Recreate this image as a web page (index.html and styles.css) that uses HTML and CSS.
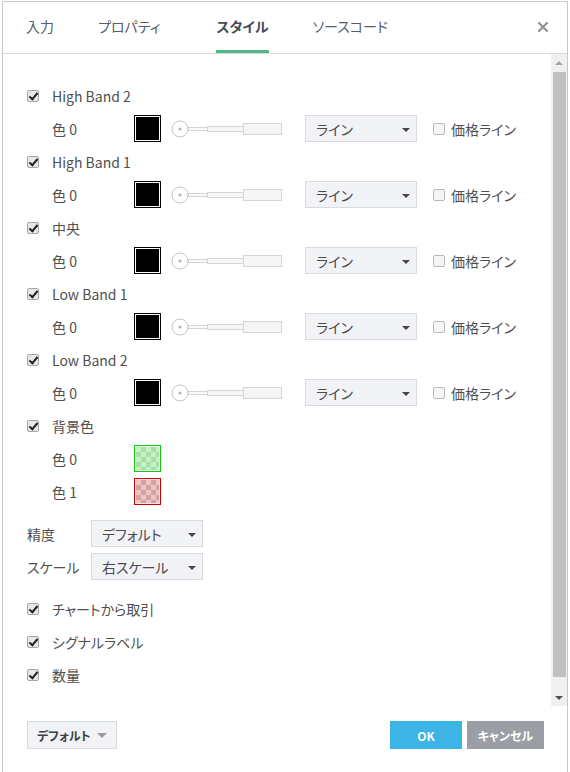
FILE: index.html
```html
<!DOCTYPE html>
<html lang="ja">
<head>
<meta charset="utf-8">
<title>スタイル</title>
<link rel="stylesheet" href="styles.css">
</head>
<body>
<div class="dialog">
  <div class="tabs">
    <div class="tab">入力</div>
    <div class="tab">プロパティ</div>
    <div class="tab tab-active">スタイル</div>
    <div class="tab">ソースコード</div>
    <div class="close"><svg width="10" height="10" viewBox="0 0 10 10"><path d="M1 1L9 9M9 1L1 9" stroke="#8e939b" stroke-width="2.2" stroke-linecap="square"/></svg></div>
  </div>
  <div class="body">
    <div class="content">
      <div class="row"><span class="cb on"></span><span class="lbl">High Band 2</span></div>
      <div class="row sub"><span class="sublbl">色 0</span><span class="swatch black"></span><svg class="slider" width="111" height="20" viewBox="0 0 111 20"><rect x="17" y="8.5" width="20" height="3" fill="#fafafa" stroke="#d3d5da"/><rect x="36.5" y="7.5" width="36" height="5" fill="#f7f7f7" stroke="#d3d5da"/><rect x="72.5" y="4.5" width="38" height="11" fill="#f6f6f6" stroke="#d3d5da"/><circle cx="9" cy="10" r="8" fill="#fff" stroke="#c3c6cd"/><circle cx="9" cy="10" r="1.6" fill="#b4b8bf"/></svg><span class="select sel-line"><span>ライン</span><i class="arrow"></i></span><span class="cb off"></span><span class="cblbl">価格ライン</span></div>
      <div class="row"><span class="cb on"></span><span class="lbl">High Band 1</span></div>
      <div class="row sub"><span class="sublbl">色 0</span><span class="swatch black"></span><svg class="slider" width="111" height="20" viewBox="0 0 111 20"><rect x="17" y="8.5" width="20" height="3" fill="#fafafa" stroke="#d3d5da"/><rect x="36.5" y="7.5" width="36" height="5" fill="#f7f7f7" stroke="#d3d5da"/><rect x="72.5" y="4.5" width="38" height="11" fill="#f6f6f6" stroke="#d3d5da"/><circle cx="9" cy="10" r="8" fill="#fff" stroke="#c3c6cd"/><circle cx="9" cy="10" r="1.6" fill="#b4b8bf"/></svg><span class="select sel-line"><span>ライン</span><i class="arrow"></i></span><span class="cb off"></span><span class="cblbl">価格ライン</span></div>
      <div class="row"><span class="cb on"></span><span class="lbl">中央</span></div>
      <div class="row sub"><span class="sublbl">色 0</span><span class="swatch black"></span><svg class="slider" width="111" height="20" viewBox="0 0 111 20"><rect x="17" y="8.5" width="20" height="3" fill="#fafafa" stroke="#d3d5da"/><rect x="36.5" y="7.5" width="36" height="5" fill="#f7f7f7" stroke="#d3d5da"/><rect x="72.5" y="4.5" width="38" height="11" fill="#f6f6f6" stroke="#d3d5da"/><circle cx="9" cy="10" r="8" fill="#fff" stroke="#c3c6cd"/><circle cx="9" cy="10" r="1.6" fill="#b4b8bf"/></svg><span class="select sel-line"><span>ライン</span><i class="arrow"></i></span><span class="cb off"></span><span class="cblbl">価格ライン</span></div>
      <div class="row"><span class="cb on"></span><span class="lbl">Low Band 1</span></div>
      <div class="row sub"><span class="sublbl">色 0</span><span class="swatch black"></span><svg class="slider" width="111" height="20" viewBox="0 0 111 20"><rect x="17" y="8.5" width="20" height="3" fill="#fafafa" stroke="#d3d5da"/><rect x="36.5" y="7.5" width="36" height="5" fill="#f7f7f7" stroke="#d3d5da"/><rect x="72.5" y="4.5" width="38" height="11" fill="#f6f6f6" stroke="#d3d5da"/><circle cx="9" cy="10" r="8" fill="#fff" stroke="#c3c6cd"/><circle cx="9" cy="10" r="1.6" fill="#b4b8bf"/></svg><span class="select sel-line"><span>ライン</span><i class="arrow"></i></span><span class="cb off"></span><span class="cblbl">価格ライン</span></div>
      <div class="row"><span class="cb on"></span><span class="lbl">Low Band 2</span></div>
      <div class="row sub"><span class="sublbl">色 0</span><span class="swatch black"></span><svg class="slider" width="111" height="20" viewBox="0 0 111 20"><rect x="17" y="8.5" width="20" height="3" fill="#fafafa" stroke="#d3d5da"/><rect x="36.5" y="7.5" width="36" height="5" fill="#f7f7f7" stroke="#d3d5da"/><rect x="72.5" y="4.5" width="38" height="11" fill="#f6f6f6" stroke="#d3d5da"/><circle cx="9" cy="10" r="8" fill="#fff" stroke="#c3c6cd"/><circle cx="9" cy="10" r="1.6" fill="#b4b8bf"/></svg><span class="select sel-line"><span>ライン</span><i class="arrow"></i></span><span class="cb off"></span><span class="cblbl">価格ライン</span></div>
      <div class="row"><span class="cb on"></span><span class="lbl">背景色</span></div>
      <div class="row sub"><span class="sublbl">色 0</span><span class="swatch green"></span></div>
      <div class="row sub"><span class="sublbl">色 1</span><span class="swatch red"></span></div>

      <div class="group">
        <div class="row"><span class="fieldlbl">精度</span><span class="select"><span>デフォルト</span><i class="arrow"></i></span></div>
        <div class="row"><span class="fieldlbl">スケール</span><span class="select"><span>右スケール</span><i class="arrow"></i></span></div>
      </div>

      <div class="group">
        <div class="row"><span class="cb on"></span><span class="lbl">チャートから取引</span></div>
        <div class="row"><span class="cb on"></span><span class="lbl">シグナルラベル</span></div>
        <div class="row"><span class="cb on"></span><span class="lbl">数量</span></div>
      </div>
    </div>
    <div class="scrollbar">
      <div class="sb-btn"><i class="sb-up"></i></div>
      <div class="sb-thumb"></div>
      <div class="sb-btn"><i class="sb-down"></i></div>
    </div>
  </div>
  <div class="footer">
    <div class="btn-default"><span>デフォルト</span><i class="arrow-gray"></i></div>
    <div class="actions">
      <div class="btn btn-ok">OK</div>
      <div class="btn btn-cancel">キャンセル</div>
    </div>
  </div>
</div>
</body>
</html>
```
FILE: styles.css
```css
html, body {
  margin: 0;
  padding: 0;
  background: #fff;
}
body {
  font-family: "Noto Sans CJK JP", "Noto Sans", sans-serif;
  font-feature-settings: "palt";
  font-size: 14px;
  color: #505050;
}
.dialog {
  box-sizing: border-box;
  margin: 1px 0 0 2px;
  width: 566px;
  height: 771px;
  border: 1px solid #c8c8c8;
  border-bottom: none;
  display: flex;
  flex-direction: column;
  background: #fff;
}
.tabs {
  box-sizing: border-box;
  height: 52px;
  border-bottom: 1px solid #d9d9d9;
  display: flex;
  align-items: stretch;
  padding-left: 23px;
  gap: 44px;
}
.tab {
  box-sizing: border-box;
  display: flex;
  align-items: center;
  font-size: 14px;
  color: #565d6a;
  border-bottom: 3px solid transparent;
  padding-bottom: 1px;
}
.tab-active {
  margin-left: 12px;
  font-weight: bold;
  color: #444b57;
  border-bottom-color: #4fb887;
}
.close {
  margin-left: auto;
  margin-right: 19px;
  display: flex;
  align-items: center;
  padding-bottom: 2px;
}
.body {
  height: 652px;
  display: flex;
}
.content {
  flex: 1;
  padding: 25px 0 0 24px;
}
.row {
  height: 33px;
  display: flex;
  align-items: center;
}
.sub {
  padding-left: 25px;
}
.group {
  margin-top: 9px;
}
.cb {
  box-sizing: border-box;
  width: 12px;
  height: 12px;
  border-radius: 2px;
  flex: none;
  position: relative;
}
.cb.on {
  border: 1px solid #a7a7a7;
  background: #e7e7e7;
}
.cb.on::after {
  content: "";
  position: absolute;
  left: 3px;
  top: 0px;
  width: 3px;
  height: 7px;
  border: solid #222;
  border-width: 0 2px 2px 0;
  transform: rotate(40deg);
}
.cb.off {
  border: 1px solid #b9b9b9;
  background: #f5f5f5;
  margin-left: 16px;
}
.lbl {
  margin-left: 13px;
}
.sublbl {
  width: 82px;
}
.cblbl {
  margin-left: 6px;
}
.fieldlbl {
  width: 64px;
  margin-left: 0;
}
.swatch {
  box-sizing: border-box;
  width: 27px;
  height: 27px;
  flex: none;
}
.swatch.black {
  border: 1px solid #000;
  background: #000;
  box-shadow: inset 0 0 0 1px #fff;
}
.swatch.green {
  border: 1px solid #14c814;
  background: repeating-conic-gradient(#a5e0a5 0 25%, #c9efc9 0 50%) 1px 1px / 10px 10px;
  box-shadow: inset 0 0 0 1px #e6f7e6;
}
.swatch.red {
  border: 1px solid #c80000;
  background: repeating-conic-gradient(#d5a0a0 0 25%, #ebc6c6 0 50%) 1px 1px / 10px 10px;
  box-shadow: inset 0 0 0 1px #f5e3e3;
}
.slider {
  margin-left: 10px;
  flex: none;
}
.select {
  box-sizing: border-box;
  width: 112px;
  height: 27px;
  border: 1px solid #d8dbe0;
  background: #f2f3f7;
  display: flex;
  align-items: center;
  justify-content: space-between;
  padding: 0 6px 0 10px;
  color: #4a4a4a;
  flex: none;
}
.sel-line {
  margin-left: 23px;
}
.arrow {
  width: 0;
  height: 0;
  border-top: 4px solid #444;
  border-left: 4px solid transparent;
  border-right: 4px solid transparent;
  margin-top: 2px;
}
.scrollbar {
  width: 16px;
  background: #f0f0f0;
  display: flex;
  flex-direction: column;
}
.sb-btn {
  height: 17px;
  display: flex;
  align-items: center;
  justify-content: center;
}
.sb-up {
  width: 0;
  height: 0;
  border-bottom: 4px solid #a3a3a3;
  border-left: 4px solid transparent;
  border-right: 4px solid transparent;
}
.sb-down {
  width: 0;
  height: 0;
  border-top: 4px solid #505050;
  border-left: 4px solid transparent;
  border-right: 4px solid transparent;
}
.sb-thumb {
  margin: 1px 1px 12px 2px;
  flex: 1;
  background: #c1c1c1;
}
.footer {
  flex: 1;
  display: flex;
  justify-content: space-between;
  align-items: flex-start;
  padding: 15px 23px 0 24px;
}
.btn-default {
  box-sizing: border-box;
  width: 90px;
  height: 28px;
  border: 1px solid #d6d9de;
  background: #f2f3f7;
  display: flex;
  align-items: center;
  padding-left: 9px;
  font-size: 12px;
  font-weight: bold;
  color: #3e3e3e;
}
.arrow-gray {
  margin-left: 6px;
  width: 0;
  height: 0;
  border-top: 5px solid #9a9a9a;
  border-left: 5px solid transparent;
  border-right: 5px solid transparent;
}
.actions {
  display: flex;
  gap: 5px;
}
.btn {
  height: 28px;
  display: flex;
  align-items: center;
  justify-content: center;
  color: #fff;
  font-weight: bold;
  font-size: 12px;
}
.btn-ok {
  width: 72px;
  background: #3cb4e5;
}
.btn-cancel {
  width: 77px;
  background: #9b9ea5;
}
```
